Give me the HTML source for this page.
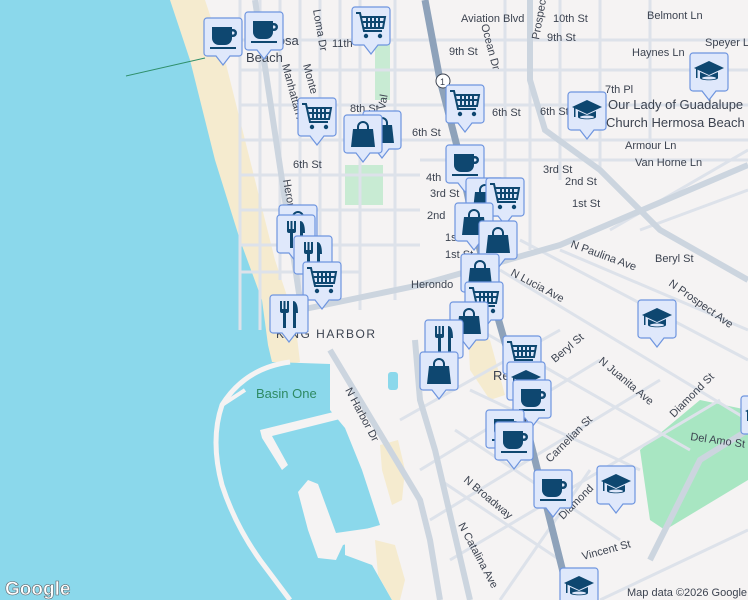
<!DOCTYPE html>
<html><head><meta charset="utf-8"><style>
html,body{margin:0;padding:0;width:748px;height:600px;overflow:hidden;background:#f5f3f3}
svg{display:block}
text{font-family:"Liberation Sans",sans-serif;fill:#3c4350}
</style></head><body>
<svg width="748" height="600" viewBox="0 0 748 600" xmlns="http://www.w3.org/2000/svg">
<defs>
<g id="box"><path d="M3 0h32a3 3 0 0 1 3 3v32a3 3 0 0 1-3 3h-9l-7 9-7-9H3a3 3 0 0 1-3-3V3a3 3 0 0 1 3-3z" fill="#dfe8fb" stroke="#6e95df" stroke-width="1.2"/></g>
<g id="cup"><use href="#box"/><g fill="#0e4770"><path d="M8 9h20v11a7 7 0 0 1-7 7h-6a7 7 0 0 1-7-7z"/><path d="M27 11h2a4 4 0 0 1 0 8h-2v-2.5h2a1.5 1.5 0 0 0 0-3h-2z"/><rect x="6" y="29" width="26" height="2"/></g></g>
<g id="cart"><use href="#box"/><g fill="none" stroke="#0e4770" stroke-width="2"><path d="M4 6h4l4 18h18M9 10h24l-2 11H12"/><path d="M15 10v11M19 10v11M23 10v11M27 10v11M11 15h21"/></g><g fill="#0e4770"><circle cx="14" cy="29" r="2.2"/><circle cx="28" cy="29" r="2.2"/></g></g>
<g id="bag"><use href="#box"/><path d="M9 14h20l2 18H7z" fill="#0e4770"/><path d="M14 15v-3a5 5 0 0 1 10 0v3" fill="none" stroke="#0e4770" stroke-width="2"/></g>
<g id="fork"><use href="#box"/><g fill="#0e4770"><rect x="10" y="6" width="2" height="10"/><rect x="13.5" y="6" width="2" height="10"/><rect x="17" y="6" width="2" height="10"/><rect x="10" y="14" width="9" height="4" rx="2"/><rect x="13" y="16" width="3" height="17"/><path d="M23 6c4 0 5 6 5 12h-2v15h-3z"/></g></g>
<g id="edu"><use href="#box"/><g fill="#0e4770"><path d="M19 8l15 7-15 7-15-7z"/><path d="M10 19v6c0 3 18 3 18 0v-6l-9 4z"/><rect x="6" y="15" width="1.5" height="10"/></g><ellipse cx="19" cy="25" rx="7" ry="1.5" fill="#dfe8fb"/></g>
</defs>
<!-- beach -->
<path d="M170 0H205L225 60L250 160L275 260L295 320L300 362L268 370Z" fill="#f5ebcf"/>
<!-- water: ocean + harbor -->
<path d="M0 0H170L190 60L215 160L240 240L262 300L268 345L272 362L330 364L330 410L345 428L362 470L380 525L345 535L345 555L372 565L392 600H0Z" fill="#8bd8eb"/>
<!-- breakwater -->
<path d="M290 362 Q245 368 222 405 Q210 440 222 485 Q235 525 260 560 L290 600" stroke="#f5f3f3" stroke-width="5" fill="none"/>
<path d="M222 405 L245 390" stroke="#f5f3f3" stroke-width="4"/>
<!-- jetty -->
<path d="M260 430 L350 408 L352 416 L272 436 L288 465 L282 470 L262 438Z" fill="#f5f3f3"/>
<!-- mole peninsula -->
<path d="M298 492 L308 480 L318 484 L336 533 L378 527 L380 535 L343 545 L336 560 L318 558 L308 530Z" fill="#f5f3f3"/>
<path d="M375 540 L395 545 L405 580 L400 600 L392 600 L378 575Z" fill="#f5ebcf"/>
<path d="M380 445 L398 440 L405 470 L402 500 L392 505 L382 470Z" fill="#f5ebcf"/>
<rect x="388" y="372" width="10" height="18" rx="3" fill="#8bd8eb"/>
<path d="M468 330 L490 340 L505 395 L490 400 L470 370Z" fill="#f5ebcf"/>
<!-- parks -->
<path d="M640 450 L700 400 L748 410 L748 480 L665 530 L650 520Z" fill="#a8e6c2"/>
<rect x="345" y="165" width="38" height="40" fill="#c8ebd3"/>
<rect x="375" y="40" width="15" height="60" fill="#c8ebd3"/>
<!-- minor roads -->
<g stroke="#dde2ea" stroke-width="3" fill="none">
<path d="M240 0V330M260 0V330M280 0V280M300 0V300M320 0V290M340 0V300M360 0V310M395 0V300M505 0V250M530 0V250M560 0V180M600 0V170M650 0V150"/>
<path d="M240 40H748M240 70H748M240 105H748M240 140H748M240 175H420M420 160H748M240 210H420M240 245H420M240 272H360"/>
<path d="M500 270L748 420M520 240L748 360M560 250L748 330M480 330L690 450M470 390L640 470M455 430L620 540M440 480L560 560M400 420L560 330M420 470L600 360M430 520L660 380M450 560L720 400M610 230L748 150M640 230L748 190M600 600L748 530M590 470L500 600"/>
</g>
<!-- major roads -->
<g stroke="#ccd5df" stroke-width="6" fill="none">
<path d="M300 310L420 285L560 245L748 165"/>
<path d="M330 350L360 400L390 450L420 500L430 540L440 600"/>
<path d="M415 340L420 400L435 450L470 600"/>
<path d="M530 0V80L545 130L600 170L660 230L748 280"/>
<path d="M650 560L700 460L748 430"/>
<path d="M255 0L300 300"/>
</g>
<path d="M425 0L440 80L458 150L475 230L490 290L510 360L535 460L570 600" stroke="#8ea2ba" stroke-width="7" fill="none"/>
<line x1="126" y1="76" x2="205" y2="58" stroke="#2f8f6a" stroke-width="1"/>
<circle cx="443" cy="81" r="7" fill="#fff" stroke="#3c4350"/><text x="440" y="85" font-size="9">1</text>
<!-- labels -->
<g font-size="11">
<text x="461" y="22">Aviation Blvd</text><text x="553" y="22">10th St</text><text x="647" y="19">Belmont Ln</text>
<text x="449" y="55">9th St</text><text x="547" y="41">9th St</text><text x="632" y="56">Haynes Ln</text><text x="705" y="46">Speyer L</text>
<text x="332" y="47">11th</text><text x="605" y="93">7th Pl</text><text x="540" y="115">6th St</text><text x="608" y="109" font-size="13">Our Lady of Guadalupe</text><text x="606" y="127" font-size="13">Church Hermosa Beach</text>
<text x="492" y="116">6th St</text><text x="412" y="136">6th St</text><text x="293" y="168">6th St</text><text x="350" y="112">8th St</text>
<text x="625" y="149">Armour Ln</text><text x="635" y="166">Van Horne Ln</text><text x="543" y="173">3rd St</text><text x="565" y="185">2nd St</text><text x="572" y="207">1st St</text>
<text x="426" y="181">4th</text><text x="430" y="197">3rd St</text><text x="427" y="219">2nd</text><text x="445" y="241">1st</text><text x="445" y="258">1st St</text>
<text x="411" y="288">Herondo</text><text x="510" y="275" transform="rotate(28 510 275)">N Lucia Ave</text><text x="570" y="247" transform="rotate(20 570 247)">N Paulina Ave</text>
<text x="655" y="262">Beryl St</text><text x="668" y="285" transform="rotate(35 668 285)">N Prospect Ave</text>
<text x="555" y="363" transform="rotate(-40 555 363)">Beryl St</text><text x="598" y="362" transform="rotate(40 598 362)">N Juanita Ave</text>
<text x="674" y="418" transform="rotate(-45 674 418)">Diamond St</text><text x="690" y="440" transform="rotate(8 690 440)">Del Amo St</text>
<text x="550" y="463" transform="rotate(-45 550 463)">Carnelian St</text><text x="463" y="481" transform="rotate(40 463 481)">N Broadway</text>
<text x="458" y="525" transform="rotate(62 458 525)">N Catalina Ave</text><text x="563" y="520" transform="rotate(-45 563 520)">Diamond</text>
<text x="583" y="560" transform="rotate(-15 583 560)">Vincent St</text><text x="345" y="390" transform="rotate(62 345 390)">N Harbor Dr</text>
<text x="276" y="338" font-size="12" letter-spacing="1.5">KING HARBOR</text>
<text x="256" y="398" font-size="13" style="fill:#2e8a63">Basin One</text>
<text x="246" y="45" font-size="13">Hermosa</text><text x="246" y="62" font-size="13">Beach</text>
<text x="282" y="65" transform="rotate(75 282 65)">Manhattan Ave</text><text x="303" y="65" transform="rotate(75 303 65)">Monte</text><text x="313" y="10" transform="rotate(80 313 10)">Loma Dr</text>
<text x="283" y="180" transform="rotate(80 283 180)">Herondo</text><text x="385" y="110" transform="rotate(-80 385 110)">Val</text>
<text x="481" y="25" transform="rotate(75 481 25)">Ocean Dr</text><text x="539" y="40" transform="rotate(-80 539 40)">Prospect Ave</text>
<text x="493" y="380" font-size="13">Re</text><text x="510" y="425" font-size="13">ach</text>
</g>
<text x="627" y="596" font-size="11">Map data ©2026 Google</text>
<text x="5" y="595" font-size="19" font-weight="bold" style="fill:#fff;stroke:#5f6368;stroke-width:.6">Google</text>
<!-- markers -->
<use href="#cup" x="204" y="18"/><use href="#cup" x="245" y="12"/><use href="#cart" x="352" y="7"/>
<use href="#cart" x="298" y="98"/><use href="#bag" x="363" y="111"/><use href="#bag" x="344" y="115"/>
<use href="#cart" x="446" y="85"/><use href="#edu" x="690" y="53"/><use href="#edu" x="568" y="92"/>
<use href="#cup" x="446" y="145"/><use href="#bag" x="466" y="178"/><use href="#cart" x="486" y="178"/>
<use href="#bag" x="455" y="203"/><use href="#bag" x="479" y="221"/>
<use href="#bag" x="279" y="205"/><use href="#fork" x="277" y="215"/><use href="#fork" x="294" y="236"/><use href="#cart" x="303" y="262"/><use href="#fork" x="270" y="295"/>
<use href="#bag" x="461" y="254"/><use href="#cart" x="465" y="282"/><use href="#bag" x="450" y="302"/><use href="#fork" x="425" y="320"/><use href="#bag" x="420" y="352"/>
<use href="#edu" x="638" y="300"/><use href="#cart" x="503" y="336"/><use href="#edu" x="507" y="362"/><use href="#cup" x="513" y="380"/>
<use href="#cup" x="486" y="410"/><use href="#cup" x="495" y="422"/><use href="#cup" x="534" y="470"/><use href="#edu" x="597" y="466"/>
<use href="#edu" x="560" y="568"/><use href="#edu" x="741" y="396"/>
</svg>
</body></html>
